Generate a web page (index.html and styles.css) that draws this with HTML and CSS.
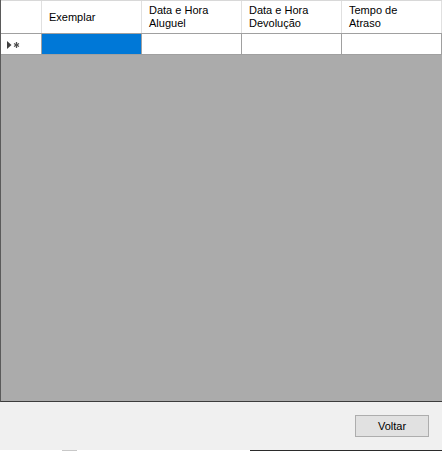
FILE: index.html
```html
<!DOCTYPE html>
<html>
<head>
<meta charset="utf-8">
<link rel="stylesheet" href="styles.css">
</head>
<body>
<div class="window">
  <div class="grid">
    <div class="header">
      <div class="cell rowhead"></div>
      <div class="cell col"><span>Exemplar</span></div>
      <div class="cell col"><span>Data e Hora<br>Aluguel</span></div>
      <div class="cell col"><span>Data e Hora<br>Devolução</span></div>
      <div class="cell col"><span>Tempo de<br>Atraso</span></div>
    </div>
    <div class="row">
      <div class="cell rowhead">
        <svg class="indicator" width="14" height="8" viewBox="0 0 14 8">
          <polygon points="0,0 4.5,4 0,8" fill="#404040"/>
          <g stroke="#505050" stroke-width="1.3">
            <line x1="9.5" y1="1" x2="9.5" y2="7"/>
            <line x1="7" y1="2.5" x2="12" y2="5.5"/>
            <line x1="7" y1="5.5" x2="12" y2="2.5"/>
          </g>
        </svg>
      </div>
      <div class="cell col selected"></div>
      <div class="cell col"></div>
      <div class="cell col"></div>
      <div class="cell col"></div>
    </div>
  </div>
  <div class="footer">
    <button class="btn">Voltar</button>
  </div>
  <div class="strip">
    <div class="s-white a"></div>
    <div class="s-gray"></div>
    <div class="s-white b"></div>
    <div class="s-dark"></div>
  </div>
</div>
</body>
</html>
```
FILE: styles.css
```css
html, body {
  margin: 0;
  padding: 0;
  background: #f0f0f0;
}
.window {
  width: 442px;
  height: 451px;
  overflow: hidden;
  display: flex;
  flex-direction: column;
  font-family: "Liberation Sans", Arial, sans-serif;
  font-size: 11px;
  color: #000;
}
.grid {
  height: 401px;
  background: #ababab;
  border-left: 1px solid #5a5a5a;
  border-bottom: 1px solid #3c3c3c;
  overflow: hidden;
  flex: none;
}
.header, .row {
  display: flex;
  background: #fff;
  width: 520px;
}
.header {
  box-sizing: border-box;
  height: 34px;
  border-top: 1px solid #d8d8d8;
  border-bottom: 1px solid #a0a0a0;
}
.row {
  height: 21px;
  box-sizing: border-box;
  border-bottom: 1px solid #a0a0a0;
}
.cell {
  box-sizing: border-box;
  border-right: 1px solid #a0a0a0;
  display: flex;
  align-items: center;
}
.header .cell {
  border-right-color: #e0e0e0;
}
.rowhead {
  width: 41px;
  flex: none;
}
.col {
  width: 100px;
  flex: none;
  padding-left: 7px;
  line-height: 13px;
}
.selected {
  background: #0078d7;
}
.indicator {
  margin-left: 6px;
  margin-top: 1px;
}
.footer {
  flex: none;
  height: 48px;
  background: #f0f0f0;
  display: flex;
  justify-content: flex-end;
  align-items: flex-start;
  padding: 13px 13px 0 0;
  box-sizing: border-box;
}
.btn {
  width: 74px;
  height: 22px;
  background: #e1e1e1;
  border: 1px solid #adadad;
  font-family: "Liberation Sans", Arial, sans-serif;
  font-size: 11px;
  color: #000;
  padding: 0;
  margin: 0;
}
.strip {
  flex: none;
  height: 2px;
  display: flex;
}
.s-white { background: #fff; }
.s-white.a { width: 62px; }
.s-gray { width: 15px; background: #c8c8c8; }
.s-white.b { width: 173px; }
.s-dark { flex: 1; background: #2b2b2b; }
```
